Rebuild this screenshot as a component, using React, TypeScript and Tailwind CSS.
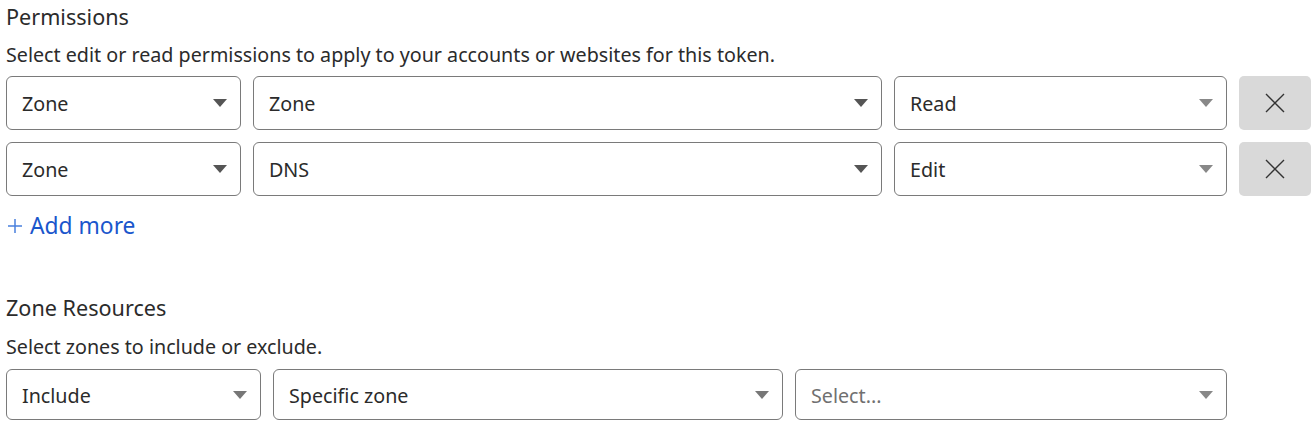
import React from "react";

const font = { fontFamily: '"Noto Sans", "Open Sans", sans-serif' };

function Arrow({ color }: { color: string }) {
  return (
    <svg width="14" height="8" viewBox="0 0 14 8" className="shrink-0">
      <path d="M0 0 L14 0 L7 8 Z" fill={color} />
    </svg>
  );
}

function Select({
  value,
  className,
  placeholder,
  arrow = "#555",
}: {
  value: string;
  className: string;
  placeholder?: boolean;
  arrow?: string;
}) {
  return (
    <div
      className={`flex items-center justify-between border border-[#7a7a7a] rounded-[6px] bg-white pl-[15px] pr-[13px] ${className}`}
    >
      <span className={`pt-[2px] ${placeholder ? "text-[#707070]" : "text-[#2b2b2b]"}`}>{value}</span>
      <Arrow color={arrow} />
    </div>
  );
}

function XButton() {
  return (
    <div className="w-[72px] h-full rounded-[5px] bg-[#d9d9d9] flex items-center justify-center">
      <svg width="20" height="20" viewBox="0 0 20 20">
        <path d="M1 1 L19 19 M19 1 L1 19" stroke="#333" strokeWidth="1.4" fill="none" />
      </svg>
    </div>
  );
}

export default function App() {
  return (
    <div className="w-[1315px] h-[421px] bg-white pl-[6px] text-[19.7px] text-[#2b2b2b]" style={font}>
      <div className="text-[21.6px] leading-[34px]">Permissions</div>
      <div className="leading-[26px] mt-[8px]">
        Select edit or read permissions to apply to your accounts or websites for this token.
      </div>
      <div className="flex gap-[12px] h-[54px] mt-[8px]">
        <Select value="Zone" className="w-[235px]" />
        <Select value="Zone" className="w-[629px]" />
        <Select value="Read" className="w-[333px]" arrow="#888" />
        <XButton />
      </div>
      <div className="flex gap-[12px] h-[54px] mt-[12px]">
        <Select value="Zone" className="w-[235px]" />
        <Select value="DNS" className="w-[629px]" />
        <Select value="Edit" className="w-[333px]" arrow="#888" />
        <XButton />
      </div>
      <div className="mt-[15px] text-[22.8px] leading-[30px] text-[#1a56cc] flex items-center pl-[2px]">
        <svg width="14" height="14" viewBox="0 0 14 14" className="mr-[8px] shrink-0">
          <path d="M7 0 V14 M0 7 H14" stroke="#4a80dd" strokeWidth="1.5" fill="none" />
        </svg>
        <span>Add more</span>
      </div>
      <div className="text-[21.6px] leading-[28px] mt-[53px]">Zone Resources</div>
      <div className="leading-[26px] mt-[12px]">Select zones to include or exclude.</div>
      <div className="flex gap-[12px] h-[51px] mt-[9px]">
        <Select value="Include" className="w-[255px]" arrow="#777" />
        <Select value="Specific zone" className="w-[510px]" arrow="#777" />
        <Select value="Select..." className="w-[432px]" placeholder arrow="#888" />
      </div>
    </div>
  );
}
